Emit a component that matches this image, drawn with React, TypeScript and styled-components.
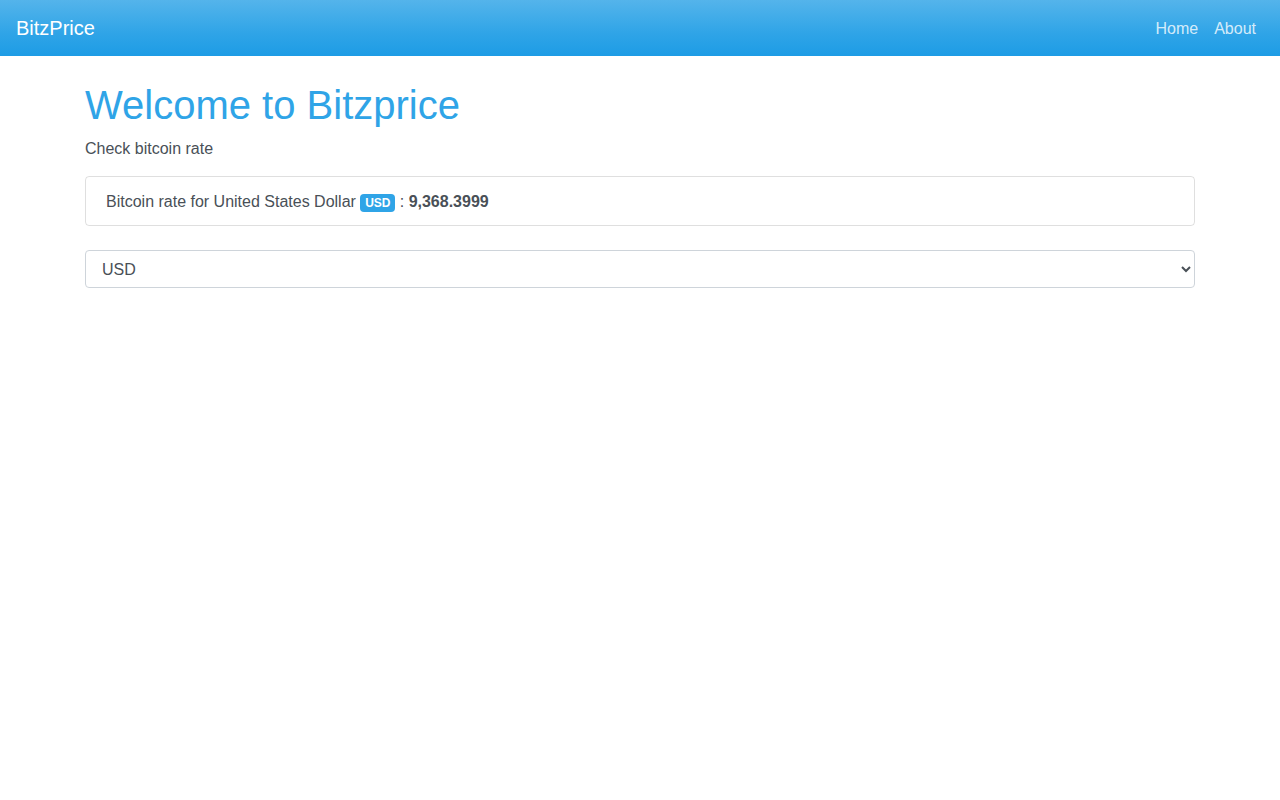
import React, { useState } from "react";
import styled, { createGlobalStyle } from "styled-components";

const Global = createGlobalStyle`
  html, body { margin: 0; padding: 0; background: #fff; }
  body {
    font-family: "Liberation Sans", Arial, Helvetica, sans-serif;
    font-size: 16px;
    line-height: 1.5;
    color: #495057;
  }
  * { box-sizing: border-box; }
`;

const Navbar = styled.nav`
  height: 56px;
  display: flex;
  align-items: center;
  justify-content: space-between;
  padding: 8px 16px;
  background-image: linear-gradient(#54b4eb, #2fa4e7 60%, #1d9ce5);
`;

const Brand = styled.a`
  font-size: 20px;
  line-height: 30px;
  color: #fff;
  text-decoration: none;
`;

const NavList = styled.div`
  display: flex;
`;

const NavLink = styled.a`
  padding: 9px 8px 7px;
  color: rgba(255, 255, 255, 0.8);
  text-decoration: none;
  font-size: 16px;
  line-height: 24px;
`;

const Container = styled.main`
  max-width: 1140px;
  margin: 0 auto;
  padding: 25px 15px 0;
`;

const Title = styled.h1`
  margin: 0 0 8px;
  font-size: 40px;
  font-weight: 500;
  line-height: 1.2;
  color: #2fa4e7;
`;

const Lead = styled.p`
  margin: 0 0 15px;
`;

const RateBox = styled.div`
  border: 1px solid rgba(0, 0, 0, 0.125);
  border-radius: 4px;
  padding: 13px 20px 11px;
  margin-bottom: 24px;
`;

const Badge = styled.span`
  display: inline-block;
  padding: 0.25em 0.4em;
  font-size: 75%;
  font-weight: 700;
  line-height: 1;
  color: #fff;
  background: #2fa4e7;
  border-radius: 4px;
  vertical-align: baseline;
`;

const Rate = styled.strong`
  font-weight: 700;
`;

const Select = styled.select`
  display: block;
  width: 100%;
  height: 38px;
  padding: 6px 12px;
  font-family: inherit;
  font-size: 16px;
  color: #495057;
  background: #fff;
  border: 1px solid #ced4da;
  border-radius: 4px;
`;

export default function App() {
  const [cur, setCur] = useState("USD");
  return (
    <>
      <Global />
      <Navbar>
        <Brand href="#">BitzPrice</Brand>
        <NavList>
          <NavLink href="#">Home</NavLink>
          <NavLink href="#">About</NavLink>
        </NavList>
      </Navbar>
      <Container>
        <Title>Welcome to Bitzprice</Title>
        <Lead>Check bitcoin rate</Lead>
        <RateBox>
          Bitcoin rate for United States Dollar <Badge>USD</Badge> : <Rate>9,368.3999</Rate>
        </RateBox>
        <Select value={cur} onChange={(e) => setCur(e.target.value)}>
          <option value="USD">USD</option>
          <option value="GBP">GBP</option>
          <option value="EUR">EUR</option>
        </Select>
      </Container>
    </>
  );
}
